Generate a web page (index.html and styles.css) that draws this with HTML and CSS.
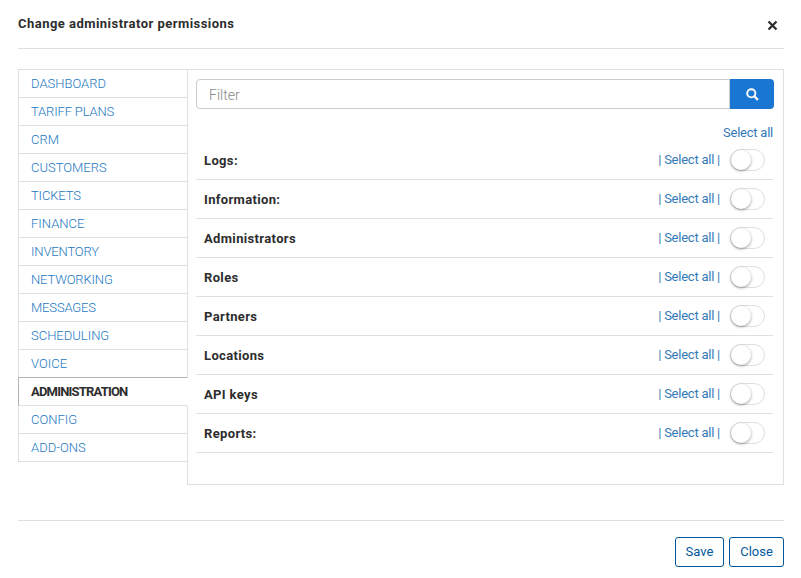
FILE: index.html
```html
<!DOCTYPE html>
<html lang="en">
<head>
<meta charset="utf-8">
<title>Change administrator permissions</title>
<link rel="stylesheet" href="styles.css">
</head>
<body>
<div class="modal">
  <header class="modal-header">
    <h1>Change administrator permissions</h1>
    <button class="dismiss" aria-label="Close"><svg width="11" height="11" viewBox="0 0 11 11"><path d="M1.5 1.5l8 8M9.5 1.5l-8 8" stroke="#2d2d2d" stroke-width="2.3"/></svg></button>
  </header>
  <main class="content">
    <nav class="tabs">
      <a>DASHBOARD</a>
      <a class="tight">TARIFF PLANS</a>
      <a>CRM</a>
      <a>CUSTOMERS</a>
      <a class="tight">TICKETS</a>
      <a>FINANCE</a>
      <a class="tight">INVENTORY</a>
      <a class="tight">NETWORKING</a>
      <a class="tight">MESSAGES</a>
      <a>SCHEDULING</a>
      <a>VOICE</a>
      <a class="active">ADMINISTRATION</a>
      <a>CONFIG</a>
      <a>ADD-ONS</a>
    </nav>
    <section class="panel">
      <div class="search">
        <input type="text" placeholder="Filter">
        <button aria-label="Search"><svg width="13" height="13" viewBox="0 0 13 13" fill="none" stroke="#fff"><circle cx="5.3" cy="5.3" r="4.1" stroke-width="1.9"/><path d="M8.3 8.3l3.6 3.6" stroke-width="2.2"/></svg></button>
      </div>
      <div class="all"><a>Select all</a></div>
      <div class="row"><b>Logs:</b><span class="pick">| <a>Select all</a> |</span><i class="toggle"></i></div>
      <div class="row"><b>Information:</b><span class="pick">| <a>Select all</a> |</span><i class="toggle"></i></div>
      <div class="row"><b>Administrators</b><span class="pick">| <a>Select all</a> |</span><i class="toggle"></i></div>
      <div class="row"><b>Roles</b><span class="pick">| <a>Select all</a> |</span><i class="toggle"></i></div>
      <div class="row"><b>Partners</b><span class="pick">| <a>Select all</a> |</span><i class="toggle"></i></div>
      <div class="row"><b>Locations</b><span class="pick">| <a>Select all</a> |</span><i class="toggle"></i></div>
      <div class="row"><b>API keys</b><span class="pick">| <a>Select all</a> |</span><i class="toggle"></i></div>
      <div class="row"><b>Reports:</b><span class="pick">| <a>Select all</a> |</span><i class="toggle"></i></div>
    </section>
  </main>
  <footer class="modal-footer">
    <button class="save">Save</button>
    <button class="close">Close</button>
  </footer>
</div>
</body>
</html>
```
FILE: styles.css
```css
* { box-sizing: border-box; }
body {
  margin: 0;
  background: #fff;
  color: #2d2d2d;
  font: 13px/18px Roboto, sans-serif;
  overflow: hidden;
}
button, input { font: inherit; letter-spacing: inherit; margin: 0; padding: 0; }
.modal { width: 766px; margin-left: 18px; }
.modal-header {
  height: 49px;
  display: flex;
  justify-content: space-between;
  align-items: flex-start;
  padding-top: 15px;
  border-bottom: 1px solid #e0e0e0;
}
h1 { margin: 0; font-size: 13px; line-height: 18px; font-weight: 700; letter-spacing: 0.47px; }
.dismiss { border: 0; background: none; width: 11px; height: 11px; margin: 5px 6px 0 0; }
.dismiss svg { display: block; }
.content { display: flex; align-items: flex-start; margin-top: 20px; }
.tabs {
  width: 170px;
  margin-right: -1px;
  border-top: 1px solid #e0e0e0;
  position: relative;
}
.tabs a {
  display: block;
  height: 28px;
  padding: 0 12px;
  line-height: 27px;
  font-weight: 300;
  letter-spacing: 0;
  color: #2378c2;
  border: 1px solid #e0e0e0;
  border-top: 0;
}
.tabs .tight { letter-spacing: -0.15px; }
.tabs .active {
  height: 29px;
  margin-top: -1px;
  line-height: 27px;
  color: #2d2d2d;
  font-weight: 700;
  letter-spacing: -0.8px;
  border-top: 1px solid #b3b3b3;
  border-left-color: #b3b3b3;
  border-right-color: #fff;
  background: #fff;
}
.panel {
  width: 597px;
  height: 416px;
  border: 1px solid #e0e0e0;
  padding: 9px 10px 0 8px;
}
.search { display: flex; width: 578px; height: 30px; }
.search input {
  width: 534px;
  border: 1px solid #ccc;
  border-radius: 4px 0 0 4px;
  padding: 1px 12px 0;
  font-size: 14px;
  font-weight: 300;
  letter-spacing: 0;
}
.search input::placeholder { color: #888; opacity: 1; }
.search button {
  width: 44px;
  border: 0;
  border-radius: 0 4px 4px 0;
  background: #1976d2;
  display: flex;
  align-items: center;
  justify-content: center;
}
.all { height: 32px; padding-top: 15px; text-align: right; color: #337ab7; letter-spacing: -0.24px; }
.row {
  height: 39px;
  display: flex;
  align-items: center;
  border-bottom: 1px solid #e0e0e0;
  padding: 0 8px;
}
.row b { flex: 1; padding-top: 2px; letter-spacing: 0.35px; }
.pick { color: #337ab7; margin-right: 10px; white-space: nowrap; letter-spacing: -0.24px; }
.toggle {
  width: 35px;
  height: 22px;
  border: 1px solid #dfdfdf;
  border-radius: 11px;
  background: #fff;
}
.toggle::before {
  content: "";
  display: block;
  width: 20px;
  height: 20px;
  border-radius: 50%;
  background: #fff;
  box-shadow: 0 1px 3px rgba(0, 0, 0, 0.4);
}
.modal-footer {
  margin-top: 35px;
  padding-top: 16px;
  border-top: 1px solid #e0e0e0;
  display: flex;
  justify-content: flex-end;
  gap: 5px;
}
.modal-footer button {
  height: 30px;
  border: 1px solid #01579b;
  border-radius: 3px;
  background: #fff;
  color: #01579b;
}
.save { width: 49px; }
.close { width: 55px; }
```
